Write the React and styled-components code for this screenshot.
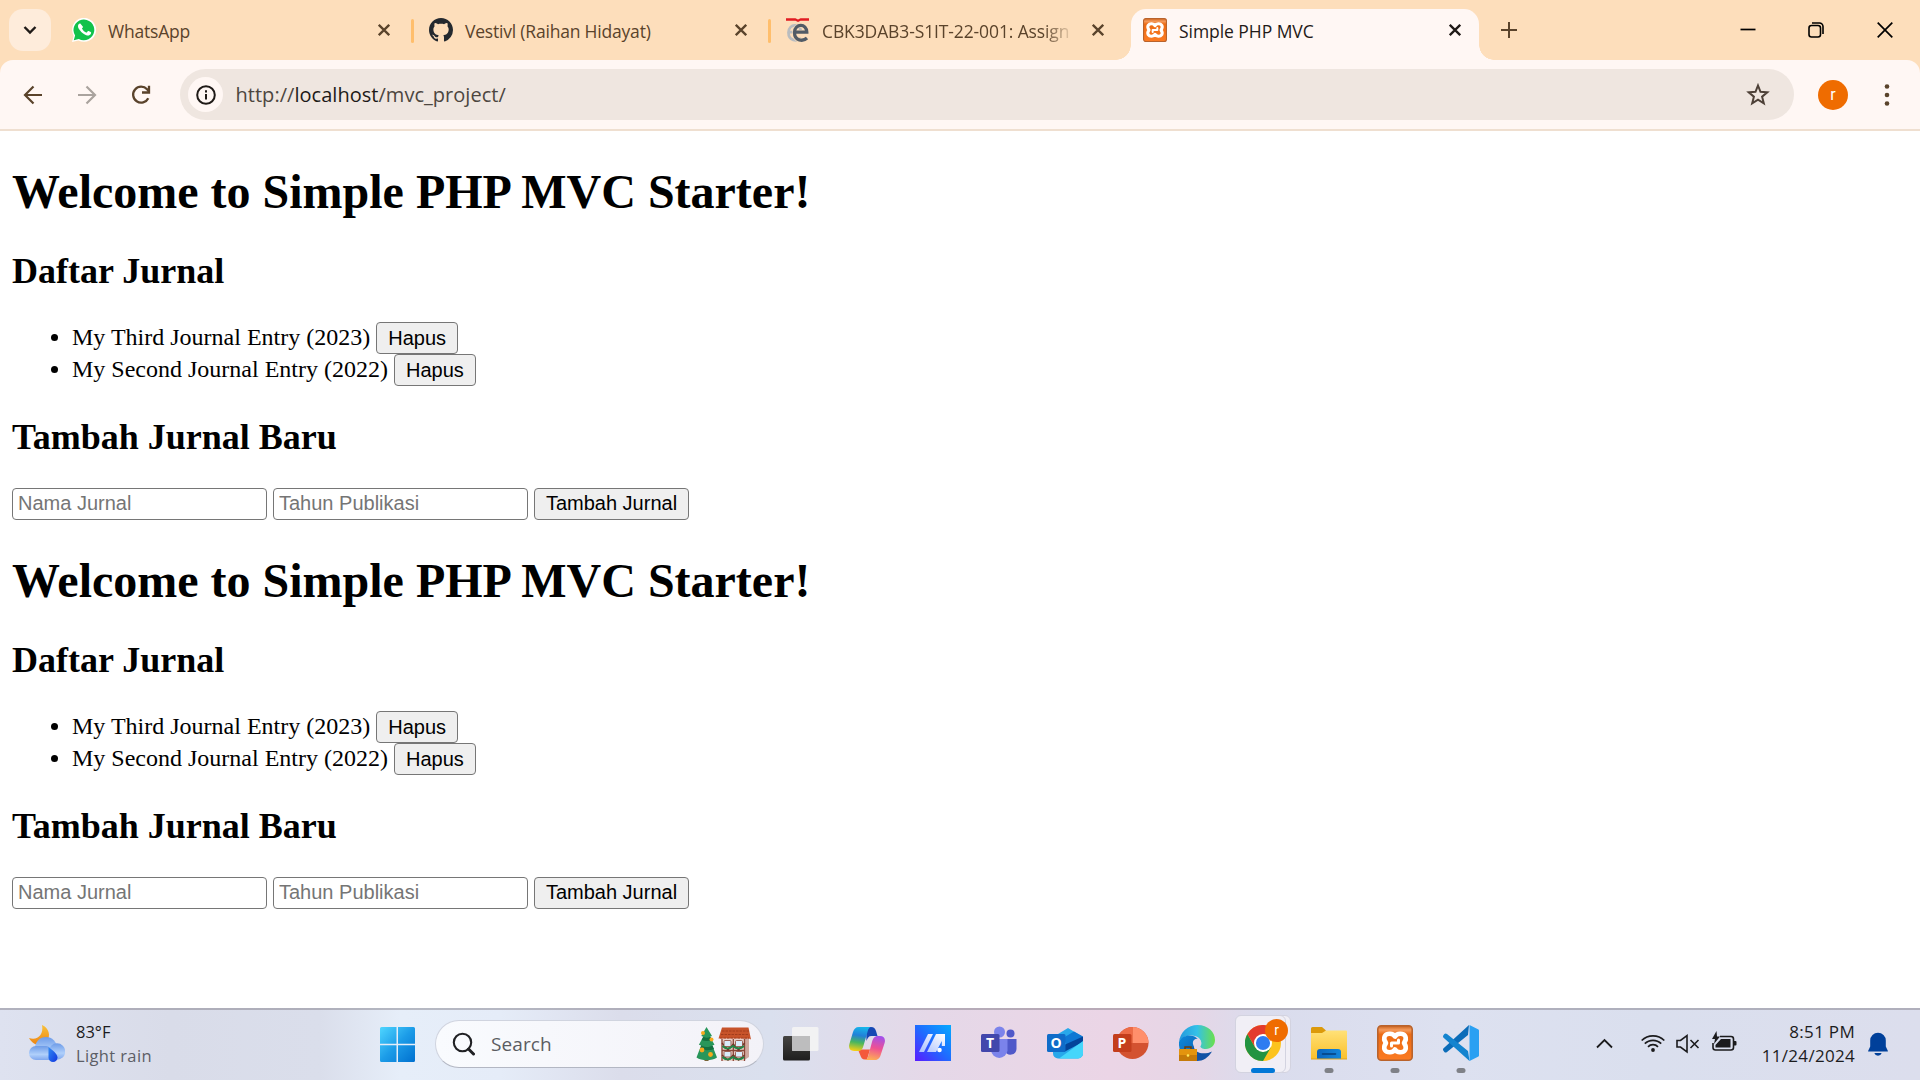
import React from "react";
import styled, { createGlobalStyle, css } from "styled-components";

const uiFont = `"Open Sans", "Noto Sans", sans-serif`;

const Global = createGlobalStyle`
  * { box-sizing: border-box; }
  html, body { margin: 0; padding: 0; background: #fff; }
  body { width: 1920px; height: 1080px; overflow: hidden; }
`;

const Screen = styled.div`
  width: 1920px;
  height: 1080px;
  display: flex;
  flex-direction: column;
  overflow: hidden;
`;

/* ---------- tab strip ---------- */
const TabStrip = styled.header`
  height: 60px;
  flex: none;
  background: #fddebb;
  display: flex;
  align-items: flex-start;
  padding-left: 9px;
`;
const TabSearch = styled.button`
  width: 42px;
  height: 42px;
  margin: 9px 9px 0 0;
  padding: 0;
  border: 0;
  border-radius: 14px;
  background: #feecdb;
  display: grid;
  place-items: center;
`;
const Tab = styled.div`
  width: ${(p) => p.$w}px;
  height: 51px;
  margin-top: 9px;
  padding: 0 ${(p) => p.$right}px 9px ${(p) => p.$left}px;
  display: flex;
  align-items: center;
  color: ${(p) => (p.$active ? "#1f1a17" : "#5a432b")};
  ${(p) =>
    p.$active &&
    css`
      background: #fff7f4;
      border-radius: 15px 15px 0 0;
      position: relative;
      &::before,
      &::after {
        content: "";
        position: absolute;
        bottom: 0;
        width: 15px;
        height: 15px;
      }
      &::before {
        left: -15px;
        background: radial-gradient(circle at 0 0, transparent 14.5px, #fff7f4 15px);
      }
      &::after {
        right: -15px;
        background: radial-gradient(circle at 100% 0, transparent 14.5px, #fff7f4 15px);
      }
    `}
`;
const TabTitle = styled.span`
  flex: 1;
  min-width: 0;
  margin: 1px 18px 0 12px;
  font: 400 17.5px/24px ${uiFont};
  letter-spacing: ${(p) => p.$ls || 0}px;
  white-space: nowrap;
  ${(p) =>
    p.$fade &&
    css`
      -webkit-mask-image: linear-gradient(90deg, #000 88%, transparent 100%);
      mask-image: linear-gradient(90deg, #000 88%, transparent 100%);
    `}
`;
const Separator = styled.i`
  width: 3px;
  height: 24px;
  margin-top: 19px;
  border-radius: 2px;
  background: #ffbe6c;
`;
const NewTab = styled.div`
  margin: 18px 0 0 18px;
  height: 24px;
`;
const WindowButtons = styled.div`
  margin-left: auto;
  margin-right: 1px;
  display: flex;
  height: 59px;
`;
const WindowButton = styled.div`
  width: 68.5px;
  display: grid;
  place-items: center;
`;

/* ---------- toolbar ---------- */
const ToolbarBack = styled.div`
  background: #fddebb;
  flex: none;
`;
const Toolbar = styled.div`
  height: 71px;
  border-bottom: 2px solid #efdfd0;
  border-radius: 13px 13px 0 0;
  background: #fff7f4;
  display: flex;
  align-items: center;
  padding: 0 18px 0 21px;
`;
const NavIcon = styled.div`
  width: 24px;
  height: 24px;
  margin-right: 30px;
`;
const Omnibox = styled.div`
  width: 1614px;
  height: 51px;
  margin-left: -3px;
  border-radius: 26px;
  background: #efe6e0;
  display: flex;
  align-items: center;
  padding: 0 24px 0 8px;
`;
const SiteInfo = styled.div`
  width: 35px;
  height: 35px;
  border-radius: 50%;
  background: #fff7f4;
  display: grid;
  place-items: center;
`;
const Url = styled.div`
  flex: 1;
  margin-left: 12.5px;
  font: 400 20px/28px ${uiFont};
  letter-spacing: 0.03px;
  color: #4d4640;
  b {
    font-weight: 400;
    color: #1d1a18;
  }
`;
const Avatar = styled.div`
  width: ${(p) => p.$size}px;
  height: ${(p) => p.$size}px;
  border-radius: 50%;
  background: #ef6c00;
  color: #fff;
  font: 400 ${(p) => p.$font}px / ${(p) => p.$size}px Roboto, sans-serif;
  text-align: center;
`;
const ProfileSlot = styled.div`
  margin: 0 27px 0 24px;
`;

/* ---------- page ---------- */
const Page = styled.main`
  flex: 1;
  min-height: 0;
  padding: 0 12px;
  background: #fff;
  color: #000;
  font-family: "Liberation Serif", "Times New Roman", serif;
  font-size: 24px;
`;
const Title = styled.h1`
  margin: 0;
  padding-top: 33px;
  font-size: 48px;
  line-height: 55px;
`;
const Heading = styled.h2`
  margin: ${(p) => p.$top}px 0 ${(p) => p.$bottom}px;
  font-size: 36px;
  line-height: 41px;
`;
const List = styled.ul`
  margin: 0;
  padding-left: 60px;
`;
const Item = styled.li`
  height: 32px;
  line-height: 30px;
`;
const ItemRow = styled.span`
  display: inline-flex;
  align-items: flex-start;
  gap: 6px;
  height: 32px;
  vertical-align: top;
`;
const Button = styled.button`
  width: ${(p) => p.$w}px;
  height: 32px;
  padding: 0;
  border: 1.5px solid #767676;
  border-radius: 4px;
  background: #efefef;
  color: #000;
  font: 400 20px/28px "Liberation Sans", Arial, sans-serif;
`;
const SubmitButton = styled(Button)`
  padding-bottom: 2px;
  line-height: 26px;
`;
const Form = styled.form`
  display: flex;
  gap: 6px;
  padding-top: 1px;
`;
const Field = styled.input`
  width: 255px;
  height: 32px;
  padding: 0 4px 1px 5px;
  border: 1.5px solid #767676;
  border-radius: 4px;
  background: #fff;
  font: 400 20px "Liberation Sans", Arial, sans-serif;
  &::placeholder {
    color: #757575;
    opacity: 1;
  }
`;

/* ---------- taskbar ---------- */
const Taskbar = styled.footer`
  flex: none;
  height: 72px;
  border-top: 2px solid rgba(110, 105, 115, 0.4);
  background: linear-gradient(
    90deg,
    #dee2f0 0,
    #d9dce9 170px,
    #dadeeb 320px,
    #e6eef9 400px,
    #e5ecf8 500px,
    #dbddeb 620px,
    #dae0ee 770px,
    #e5d8e8 930px,
    #ebd5e6 1110px,
    #e6d6e6 1190px,
    #dadced 1260px,
    #dde1f0 1450px,
    #dadfee 1650px,
    #dcdeed 1920px
  );
  background-origin: border-box;
  display: flex;
  font-family: ${uiFont};
`;
const Weather = styled.div`
  width: 380px;
  padding: 15px 0 0 29px;
  display: flex;
  gap: 11px;
`;
const Lines = styled.div`
  margin-top: -5px;
  font-size: ${(p) => p.$size || 16.5}px;
  line-height: 24px;
  color: #1c1c1e;
  text-align: ${(p) => p.$align || "left"};
  letter-spacing: ${(p) => p.$ls || 0}px;
`;
const Muted = styled.div`
  color: #5c5e66;
  letter-spacing: 0.37px;
`;
const Start = styled.div`
  width: 35px;
  margin: 17px 21px 0 0;
`;
const Search = styled.div`
  width: 329px;
  height: 48px;
  margin-top: 10px;
  margin-left: -1px;
  border: 1.5px solid #d0d4df;
  border-bottom-color: #b3b7c3;
  border-radius: 24px;
  background: linear-gradient(90deg, #f9fbfe, #f3f2f8);
  display: flex;
  align-items: center;
  padding: 0 11px 0 15px;
  span {
    flex: 1;
    margin-left: 16px;
    font-size: 19px;
    letter-spacing: 0.1px;
    color: #5b5c61;
  }
`;
const Apps = styled.div`
  display: flex;
  padding-left: 4px;
`;
const AppSlot = styled.div`
  width: 66px;
  height: 70px;
  padding-top: 15px;
  display: flex;
  justify-content: center;
  position: relative;
  svg {
    display: block;
    position: relative;
  }
`;
const ActiveTile = styled.div`
  position: absolute;
  left: 5px;
  top: 5px;
  width: ${(p) => p.$w}px;
  height: 58px;
  border: 1.5px solid #d3d3e0;
  border-radius: 6px;
  background: #f1eff6;
`;
const Indicator = styled.i`
  position: absolute;
  top: 58px;
  left: 50%;
  width: ${(p) => (p.$active ? 24 : 9)}px;
  height: 5px;
  transform: translateX(-50%);
  border-radius: 3px;
  background: ${(p) => (p.$active ? "#0078d7" : "#7f8187")};
`;
const Badge = styled.div`
  position: absolute;
  left: 35px;
  top: 9px;
`;
const Tray = styled.div`
  margin-left: auto;
  display: flex;
  padding: 0 32px 0 0;
`;
const TrayIcon = styled.div`
  margin-top: ${(p) => p.$top}px;
  margin-right: ${(p) => p.$gap}px;
  height: 26px;
`;
const Clock = styled.div`
  width: 94px;
  margin-right: 13px;
  padding-top: 15px;
`;

/* ---------- icons ---------- */
const Close = ({ color = "#5a432b" }) => (
  <svg width="12" height="24" viewBox="0 0 12 24" fill="none" stroke={color} strokeWidth="2.3">
    <path d="M.8 6.800l10.400 10.400M11.200 6.800L.8 17.200" />
  </svg>
);
const WhatsApp = () => (
  <svg width="24" height="24" viewBox="0 0 24 24">
    <path fill="#fff" d="M0 24l1.700-6.200A12 12 0 1 1 6.400 22.400z" />
    <path fill="#12c24b" d="M1.800 22.200l1.300-4.700A10.400 10.400 0 1 1 6.800 21z" />
    <path fill="#fff" d="M8.500 6c-.3-.6-.5-.6-.9-.6-.9 0-2.200 1.100-2.200 3 0 1.900 1.400 3.700 1.600 3.900.2.300 2.700 4.300 6.700 5.800 3.300 1.300 4 .9 4.600.7 1-.3 2-1.300 2.100-2.200.2-1 .1-1.200-.4-1.400l-2.500-1.200c-.4-.2-.7-.1-.9.2l-1 1.300c-.2.300-.5.300-.9.100-2.200-1-3.600-2.500-4.600-4.300-.2-.3 0-.5.200-.7.700-.7 1-1.200.8-1.700z" transform="translate(1.300 .9) scale(.87)" />
  </svg>
);
const GitHub = () => (
  <svg width="24" height="24" viewBox="0 0 16 16" fill="#24292f">
    <path d="M8 0C3.580 0 0 3.580 0 8c0 3.540 2.290 6.530 5.470 7.590.4.070.55-.17.55-.38 0-.19-.01-.82-.01-1.490-2.010.37-2.530-.49-2.690-.94-.09-.23-.48-.94-.82-1.130-.28-.15-.68-.52-.01-.53.63-.01 1.080.58 1.230.82.72 1.210 1.870.87 2.330.66.07-.52.28-.87.51-1.070-1.780-.2-3.640-.89-3.640-3.950 0-.87.31-1.590.82-2.150-.08-.2-.36-1.020.08-2.120 0 0 .67-.21 2.200.82.64-.18 1.320-.27 2-.27s1.360.09 2 .27c1.530-1.040 2.200-.82 2.200-.82.44 1.100.16 1.920.08 2.120.51.56.82 1.270.82 2.150 0 3.070-1.870 3.750-3.650 3.950.29.25.54.73.54 1.480 0 1.070-.01 1.930-.01 2.200 0 .21.15.46.55.38A8.010 8.010 0 0 0 16 8c0-4.420-3.580-8-8-8z" />
  </svg>
);
const eShape = "M8.500 14.200h12.300C20.800 5 8.800 5.300 8.500 14.500c0 8.500 8.500 9.300 12.500 5.500";
const ELearn = () => (
  <svg width="24" height="24" viewBox="0 0 24 24" fill="none">
    <path d={eShape} transform="translate(-6 0)" stroke="#b9bcbf" strokeWidth="2.800" />
    <path d={eShape} stroke="#fddebb" strokeWidth="4.600" />
    <path d={eShape} stroke="#515b66" strokeWidth="3.300" />
    <path d="M0 .3h9.500l2.500 1.200 2.500-1.200H23v2.500h-8.500L12 4 9.500 2.800H0z" fill="#e11b22" />
  </svg>
);
const Xampp = ({ size }) => (
  <svg width={size} height={size} viewBox="0 0 36 36">
    <defs>
      <linearGradient id={"xa" + size} x2="0" y2="1">
        <stop stopColor="#c9611c" />
        <stop offset=".12" stopColor="#f59a5b" />
        <stop offset=".25" stopColor="#ec6b14" />
        <stop offset="1" stopColor="#fb7b23" />
      </linearGradient>
    </defs>
    <rect x=".8" y=".8" width="34.400" height="34.400" rx="3.500" fill={"url(#xa" + size + ")"} stroke="#b9632c" strokeWidth="1.600" />
    <path
      d="M18 11.500C16 8 10 7.800 7.800 11c-1.500 2.800-.3 5 1.200 7-1.500 2-2.700 4.200-1.200 7 2.200 3.200 8.200 3 10.200-.5 2 3.500 8 3.700 10.200.5 1.500-2.800.3-5-1.200-7 1.500-2 2.700-4.200 1.200-7C26 7.800 20 8 18 11.500z"
      fill="none"
      stroke="#fff"
      strokeWidth="4.600"
      strokeLinejoin="round"
    />
    <path d="M14.500 18h7M21.500 15v3M14.500 18v3" stroke="#fff" strokeWidth="3" strokeLinecap="round" />
  </svg>
);
const WeatherIcon = () => (
  <svg width="36" height="37" viewBox="0 0 36 37">
    <defs>
      <linearGradient id="moon" x2="0" y2="1"><stop stopColor="#f7c23c" /><stop offset="1" stopColor="#ee8413" /></linearGradient>
      <linearGradient id="cl" x2="0" y2="1"><stop stopColor="#6d9be8" /><stop offset=".6" stopColor="#b0d0fb" /><stop offset="1" stopColor="#7fa7ee" /></linearGradient>
      <linearGradient id="drop" x2="1" y2="1"><stop stopColor="#2f8bf2" /><stop offset="1" stopColor="#1237e0" /></linearGradient>
    </defs>
    <path d="M13 0c7 3 9 11 5 16S5 22 0 13c8 3 15-3 13-13z" fill="url(#moon)" />
    <circle cx="17" cy="23" r="11" fill="url(#cl)" />
    <circle cx="28" cy="26.500" r="8.200" fill="url(#cl)" />
    <path d="M7 21h10c3 0 6 3 6 8v6H7a7 7 0 0 1 0-14z" fill="url(#cl)" />
    <path d="M19.500 22c4 3 9 7 9 10.500a4.500 4.500 0 0 1-9 0z" fill="url(#drop)" />
  </svg>
);
const StartIcon = () => (
  <svg width="35" height="35" viewBox="0 0 35 35">
    <defs><linearGradient id="win" gradientUnits="userSpaceOnUse" x1="0" y1="0" x2="35" y2="35"><stop stopColor="#4fd6ff" /><stop offset=".5" stopColor="#1c9ce8" /><stop offset="1" stopColor="#0070cf" /></linearGradient></defs>
    <path fill="url(#win)" d="M1.500 0h15v16.700H0V1.500A1.500 1.500 0 0 1 1.500 0zM18 0h15.500A1.500 1.500 0 0 1 35 1.500v15.200H18zM0 18.200h16.500V35h-15A1.500 1.500 0 0 1 0 33.500zM18 18.200h17v15.300a1.500 1.500 0 0 1-1.500 1.500H18z" />
  </svg>
);
const Holiday = () => (
  <svg width="56" height="36" viewBox="0 0 56 36">
    <path fill="#8a5b31" d="M8.500 30h4v5h-4z" />
    <path fill="#28965a" d="M10.500 1l5.500 9-2 .7 4.500 8-2.200.8L21 31.500c-5 3.500-15.500 3.500-20.500 0l4.600-12-2.200-.8 4.400-8-2-.7z" />
    <path fill="#14703f" d="M5.500 19.500c4 2.200 8 1.800 11 0l1.500 3.600c-4 1.600-10 1.600-14 0zM7.300 10.700c2.500 1.400 5 1.200 7 0l1.800 3.300c-3 1.300-7.500 1.300-10.500 0z" />
    <g fill="#f6a91d"><circle cx="7" cy="7" r="2" /><circle cx="15.500" cy="13.500" r="2" /><circle cx="6" cy="24" r="2.400" /><circle cx="14.500" cy="28.500" r="2.400" /></g>
    <path fill="#cfa79e" d="M47 12l6-7v26l-6 4z" />
    <path fill="#e9cfc8" d="M25.500 13H49v22H25.500z" />
    <path d="M26 13v22M37.300 13v22M48.500 13v22M25.500 24.500H49" stroke="#8a4638" strokeWidth="1.300" fill="none" />
    <path d="M26 17l6 7 5.300-6 5.300 6 6-7M26 29l6 5 5.300-5 5.300 5 6-5" stroke="#74352a" strokeWidth="1.400" fill="none" />
    <g fill="#d9ecfb" stroke="#8c4434" strokeWidth=".8"><rect x="28" y="14.500" width="7" height="6" rx="1" /><rect x="39.500" y="14.500" width="7" height="6" rx="1" /><rect x="28" y="25.500" width="7" height="5.500" rx="1" /><rect x="39.500" y="25.500" width="7" height="5.500" rx="1" /></g>
    <path d="M26.500 20c3 3 7 3 10.500 0 3 3 8 3 11 0M26.500 31c3 3 7 3 10.500 0 3 3 8 3 11 0" stroke="#248547" strokeWidth="1.800" fill="none" />
    <path fill="#c7532a" d="M26 1.500h26.500L55 13.500l-2-1H22.500z" />
    <path d="M26 5h27M25 8.500h28M24 12h29" stroke="#9f3b1b" strokeWidth=".9" strokeDasharray="2.500 1" />
  </svg>
);
const TaskView = () => (
  <svg width="36" height="36" viewBox="0 0 36 36">
    <defs><linearGradient id="tv" x2="0" y2="1"><stop stopColor="#454442" /><stop offset="1" stopColor="#1e1e1e" /></linearGradient></defs>
    <rect x="0" y="11" width="27" height="24.500" rx="1.500" fill="url(#tv)" />
    <rect x="9" y="2" width="26.500" height="24" rx="1.500" fill="#f2f2f3" />
    <path d="M9 11h18v15H10.500A1.500 1.500 0 0 1 9 24.500z" fill="#bdbdbe" />
  </svg>
);
const Copilot = () => (
  <svg width="36" height="36" viewBox="0 0 36 36">
    <defs>
      <linearGradient id="cp1" x1=".5" x2=".35" y2="1"><stop stopColor="#17b5ea" /><stop offset=".35" stopColor="#2180d8" /><stop offset=".65" stopColor="#49b65f" /><stop offset="1" stopColor="#f6cf15" /></linearGradient>
      <linearGradient id="cp2" x1=".6" x2=".4" y2="1"><stop stopColor="#a350ea" /><stop offset=".5" stopColor="#ef5192" /><stop offset="1" stopColor="#fdae55" /></linearGradient>
    </defs>
    <path d="M17 2h5c3 0 4 1.500 5 4l1.500 5h-6c-3 0-4 2-5 5z" fill="#1648b4" />
    <path d="M9 24.500h12l-3 10h-2c-3 0-4-2-5-5z" fill="#f4593b" />
    <path d="M10 2h13c-3 0-3.700 2-4.500 5l-3.800 13c-1 3.500-2 6-5.500 6H5c-4 0-5.800-3-4.600-7L4 7c1-3 2.500-5 6-5z" fill="url(#cp1)" />
    <path d="M22 11h9c4 0 5.800 3 4.600 7L32 29c-1 3.500-2.500 6-6 6H15c3 0 3.700-2 4.500-5l3.200-12c1-3.500 1.800-6 5-7z" fill="url(#cp2)" />
  </svg>
);
const MyAsus = () => (
  <svg width="36" height="36" viewBox="0 0 36 36">
    <defs><linearGradient id="ma" x1="0" y1="1" x2="1" y2="0"><stop stopColor="#5a1bff" /><stop offset=".5" stopColor="#1f6bff" /><stop offset="1" stopColor="#05aaff" /></linearGradient>
    <linearGradient id="mb" x1="1" y1="0" x2="0" y2="1"><stop stopColor="#fff" /><stop offset="1" stopColor="#a9bfff" /></linearGradient></defs>
    <path d="M0 0h36v36H0z" fill="url(#ma)" />
    <path fill="url(#mb)" d="M13 9h5L9 27H4zM21 9h5l-9 18h-5zM25 9h5v12h-3.200v-5L21 27h-4.500z" />
    <circle cx="24.500" cy="25" r="2.300" fill="#fff" />
  </svg>
);
const Letter = ({ x, y, children }) => (
  <text x={x} y={y} fill="#fff" textAnchor="middle" fontFamily='"Open Sans", sans-serif' fontWeight="700" fontSize="14">{children}</text>
);
const Teams = () => (
  <svg width="36" height="36" viewBox="0 0 36 36">
    <circle cx="29.500" cy="8.500" r="4" fill="#4f58c9" />
    <path d="M24 14h11.500v10a6 6 0 0 1-11.500 2z" fill="#5059c9" />
    <circle cx="18.500" cy="7" r="5.500" fill="#7b83eb" />
    <path d="M10 14h16.500v11.500a8.300 8.300 0 0 1-16.500 0z" fill="#7b83eb" />
    <rect y="9" width="18.500" height="18" rx="1.500" fill="#4247ac" />
    <Letter x="9" y="23">T</Letter>
  </svg>
);
const Outlook = () => (
  <svg width="36" height="36" viewBox="0 0 36 36">
    <path d="M6 12L21 3l15 9v16a5 5 0 0 1-5 5.500H11a5 5 0 0 1-5-5z" fill="#28a8ea" />
    <path d="M27 6.500l9 5L20 21l-4-8z" fill="#0f78d4" />
    <path d="M36 11.500V17L17 27v-7z" fill="#03449a" />
    <path d="M36 16v12a5 5 0 0 1-5 5.500H12z" fill="#45d6fb" />
    <rect y="9" width="18.500" height="18" rx="1.500" fill="#0f6cc9" />
    <Letter x="9.200" y="23">O</Letter>
  </svg>
);
const PowerPoint = () => (
  <svg width="36" height="36" viewBox="0 0 36 36">
    <circle cx="19.500" cy="18" r="16" fill="#d35230" />
    <path d="M19.500 2a16 16 0 0 1 16 16h-16z" fill="#ff8f6b" />
    <path d="M19.500 2v16h-16a16 16 0 0 1 16-16z" fill="#ed6c47" />
    <rect y="9" width="18.500" height="18" rx="1.500" fill="#c43e1c" />
    <Letter x="9" y="23">P</Letter>
  </svg>
);
const Edge = () => (
  <svg width="36" height="36" viewBox="0 0 36 36">
    <defs>
      <linearGradient id="eg1"><stop stopColor="#2598dc" /><stop offset=".5" stopColor="#34c1e8" /><stop offset="1" stopColor="#6be04a" /></linearGradient>
      <linearGradient id="eg2" x2="1" y2="1"><stop stopColor="#0d8bdc" /><stop offset="1" stopColor="#0f55a8" /></linearGradient>
    </defs>
    <path d="M0 17C1 7 9 0 18.500 0 29 0 36 7 36 15c0 5.500-4 9-9 9-4 0-6-1.500-5.500-3 1.500-1.500 1.500-7-4-9.500C10 9 3 12 0 17z" fill="url(#eg1)" />
    <path d="M0 17c3-7 12-8 17-4.500 3 2 3 4 2 4-4 0-6 5-4 10 1 4 5 7 9 7.500C10 39-1 30 0 17z" fill="url(#eg2)" />
    <path d="M14.500 20c.5 9 11 10 18.500 6.500C29 33 24 36 18 36c-5-5-6-11-3.500-16z" fill="#1252a5" />
    <circle cx="18" cy="18" r="4.200" fill="#e7d6e6" />
    <path d="M17 21c1 5 8 7 16 3.500l-1 2.300c-8 2.500-14 .5-16-4z" fill="#e7d6e6" />
    <path d="M6 24v-2h6v2" fill="none" stroke="#6c3c0a" strokeWidth="1.500" />
    <rect y="24" width="18" height="12" fill="#c57a09" />
    <path d="M0 24h18v6H0z" fill="#e3940e" />
    <circle cx="9" cy="30.500" r="1.300" fill="#ffea5b" />
  </svg>
);
const Chrome = () => (
  <svg width="36" height="36" viewBox="0 0 48 48">
    <circle cx="24" cy="24" r="24" fill="#fcc31e" />
    <path d="M3.200 12L13.600 30 24 36l10.400-6L24 48A24 24 0 0 1 3.200 12z" fill="#229342" />
    <path d="M3.200 12L13.600 30 24 12h20.800A24 24 0 0 0 3.200 12z" fill="#e33b2e" />
    <circle cx="24" cy="24" r="12" fill="#fff" />
    <circle cx="24" cy="24" r="9.400" fill="#2e7cf0" />
  </svg>
);
const Explorer = () => (
  <svg width="36" height="36" viewBox="0 0 36 36">
    <defs><linearGradient id="fx" x2="0" y2="1"><stop stopColor="#ffe178" /><stop offset="1" stopColor="#fbc02a" /></linearGradient>
    <linearGradient id="fy"><stop stopColor="#0c65bd" /><stop offset="1" stopColor="#1287dc" /></linearGradient></defs>
    <path d="M0 3.500A1.500 1.500 0 0 1 1.500 2H11l4 3.500-4 5H0z" fill="#dc9a0b" />
    <path d="M0 8h11l4-2.500h20A1 1 0 0 1 36 6.500V34H0z" fill="url(#fx)" />
    <path d="M6 34v-7a3 3 0 0 1 3-3h18a3 3 0 0 1 3 3v7z" fill="url(#fy)" />
    <path d="M11.500 29h13" stroke="#053f7e" strokeWidth="1.500" strokeLinecap="round" />
    <path d="M0 34h36" stroke="#e0a61e" strokeWidth="1.200" />
  </svg>
);
const VSCode = () => (
  <svg width="36" height="36" viewBox="0 0 36 36">
    <path d="M26 0l-1 10L4 27c-1 .8-2 .6-2.600 0L.6 26c-.8-.8-.8-2 0-2.700z" fill="#0b6cb8" />
    <path d="M26.500 36L25 26 4 9c-1-.8-2-.6-2.600 0L.6 10c-.8.8-.8 2 0 2.700z" fill="#1484cf" />
    <path d="M26.500 0L35 4.200a1.500 1.500 0 0 1 1 1.500v24.600a1.500 1.500 0 0 1-1 1.500L26.500 36z" fill="#2aa0f2" />
  </svg>
);

const taskApps = [
  { name: "task-view", Icon: TaskView },
  { name: "copilot", Icon: Copilot },
  { name: "myasus", Icon: MyAsus },
  { name: "teams", Icon: Teams },
  { name: "outlook", Icon: Outlook },
  { name: "powerpoint", Icon: PowerPoint },
  { name: "edge", Icon: Edge },
  { name: "chrome", Icon: Chrome, active: true },
  { name: "explorer", Icon: Explorer, open: true },
  { name: "xampp", Icon: () => <Xampp size={36} />, open: true },
  { name: "vscode", Icon: VSCode, open: true },
];

const entries = ["My Third Journal Entry (2023)", "My Second Journal Entry (2022)"];

function JournalSection() {
  return (
    <section>
      <Title>Welcome to Simple PHP MVC Starter!</Title>
      <Heading $top={32} $bottom={30}>Daftar Jurnal</Heading>
      <List>
        {entries.map((text) => (
          <Item key={text}>
            <ItemRow>
              {text}
              <Button type="button" $w={82}>Hapus</Button>
            </ItemRow>
          </Item>
        ))}
      </List>
      <Heading $top={31} $bottom={29}>Tambah Jurnal Baru</Heading>
      <Form onSubmit={(e) => e.preventDefault()}>
        <Field placeholder="Nama Jurnal" />
        <Field placeholder="Tahun Publikasi" />
        <SubmitButton $w={155}>Tambah Jurnal</SubmitButton>
      </Form>
    </section>
  );
}

export default function App() {
  return (
    <Screen>
      <Global />
      <TabStrip>
        <TabSearch>
          <svg width="14" height="10" viewBox="0 0 14 10" fill="none" stroke="#1f1a17" strokeWidth="2.400"><path d="M1.500 2L7 7.500 12.500 2" /></svg>
        </TabSearch>
        <Tab $w={351} $left={12} $right={21}>
          <WhatsApp />
          <TabTitle $ls={-0.2}>WhatsApp</TabTitle>
          <Close />
        </Tab>
        <Separator />
        <Tab $w={354} $left={15} $right={21}>
          <GitHub />
          <TabTitle $ls={-0.2}>Vestivl (Raihan Hidayat)</TabTitle>
          <Close />
        </Tab>
        <Separator />
        <Tab $w={360} $left={15} $right={27}>
          <ELearn />
          <TabTitle $fade $ls={-0.12}>CBK3DAB3-S1IT-22-001: Assign</TabTitle>
          <Close />
        </Tab>
        <Tab $w={348} $active $left={12} $right={18}>
          <Xampp size={24} />
          <TabTitle $ls={-0.05}>Simple PHP MVC</TabTitle>
          <Close color="#1f1a17" />
        </Tab>
        <NewTab>
          <svg width="24" height="24" viewBox="0 0 24 24" stroke="#5a432b" strokeWidth="2"><path d="M12 4v16M4 12h16" /></svg>
        </NewTab>
        <WindowButtons>
          <WindowButton>
            <svg width="16" height="16" viewBox="0 0 16 16" stroke="#000" strokeWidth="1.700"><path d="M.5 7.500h15" /></svg>
          </WindowButton>
          <WindowButton>
            <svg width="16" height="16" viewBox="0 0 16 16" fill="none" stroke="#000" strokeWidth="1.600"><rect x="1" y="3.500" width="11.500" height="11.500" rx="2.500" /><path d="M4 1h7.500A3.500 3.500 0 0 1 15 4.500V12" /></svg>
          </WindowButton>
          <WindowButton>
            <svg width="16" height="16" viewBox="0 0 16 16" stroke="#000" strokeWidth="1.700"><path d="M.7.7l14.600 14.600M15.300.7L.7 15.300" /></svg>
          </WindowButton>
        </WindowButtons>
      </TabStrip>

      <ToolbarBack>
        <Toolbar>
          <NavIcon>
            <svg width="24" height="24" viewBox="0 0 24 24" fill="none" stroke="#5a432b" strokeWidth="2.200"><path d="M21 12H4.500M12.500 3.500L4 12l8.500 8.500" /></svg>
          </NavIcon>
          <NavIcon>
            <svg width="24" height="24" viewBox="0 0 24 24" fill="none" stroke="#aaa39e" strokeWidth="2.200"><path d="M3 12h16.500M11.500 3.500L20 12l-8.500 8.500" /></svg>
          </NavIcon>
          <NavIcon>
            <svg width="24" height="24" viewBox="0 0 24 24" fill="none" stroke="#5a432b" strokeWidth="2.300"><path d="M19.300 15.200a8 8 0 1 1-1.200-8.900l1.700 2" /><path d="M20 2.800v6.700h-7" /></svg>
          </NavIcon>
          <Omnibox>
            <SiteInfo>
              <svg width="20" height="20" viewBox="0 0 20 20" fill="none" stroke="#1f1a17" strokeWidth="2"><circle cx="10" cy="10" r="8.800" /><path d="M10 9v5.500M10 5.200v2.200" /></svg>
            </SiteInfo>
            <Url>http://<b>localhost</b>/mvc_project/</Url>
            <svg width="24" height="24" viewBox="0 0 24 24" fill="none" stroke="#4d4037" strokeWidth="2"><path d="M12 2.500l2.500 6.300 6.800.5-5.200 4.400 1.700 6.600L12 16.700l-5.800 3.600 1.700-6.600-5.200-4.400 6.800-.5z" /></svg>
          </Omnibox>
          <ProfileSlot>
            <Avatar $size={30} $font={16}>r</Avatar>
          </ProfileSlot>
          <svg width="24" height="24" viewBox="0 0 24 24" fill="#5a432b"><circle cx="12" cy="3.500" r="2.300" /><circle cx="12" cy="12" r="2.300" /><circle cx="12" cy="20.500" r="2.300" /></svg>
        </Toolbar>
      </ToolbarBack>

      <Page>
        <JournalSection />
        <JournalSection />
      </Page>

      <Taskbar>
        <Weather>
          <WeatherIcon />
          <Lines>
            83°F
            <Muted>Light rain</Muted>
          </Lines>
        </Weather>
        <Start><StartIcon /></Start>
        <Search>
          <svg width="24" height="24" viewBox="0 0 24 24" fill="none" stroke="#202124"><circle cx="11.500" cy="10.500" r="8.700" strokeWidth="2.100" /><path d="M17.500 17l5 5" strokeWidth="3" strokeLinecap="round" /></svg>
          <span>Search</span>
          <Holiday />
        </Search>
        <Apps>
          {taskApps.map(({ name, Icon, active, open }) => (
            <AppSlot key={name}>
              {active && <ActiveTile $w={56} />}
              {active && <ActiveTile $w={51} />}
              <Icon />
              {active && (
                <Badge>
                  <Avatar $size={23} $font={14}>r</Avatar>
                </Badge>
              )}
              {(active || open) && <Indicator $active={active} />}
            </AppSlot>
          ))}
        </Apps>
        <Tray>
          <TrayIcon $top={22} $gap={28}>
            <svg width="17" height="24" viewBox="0 0 17 24" fill="none" stroke="#1b1b1d" strokeWidth="1.800"><path d="M1 15.500L8.500 8l7.500 7.500" /></svg>
          </TrayIcon>
          <TrayIcon $top={21} $gap={11}>
            <svg width="24" height="24" viewBox="0 0 24 24" fill="none" stroke="#1b1b1d" strokeWidth="1.700"><path d="M.7 9.500a16 16 0 0 1 22.600 0M3.800 12.700a11.600 11.600 0 0 1 16.400 0M7 15.800a7 7 0 0 1 10 0" /><circle cx="12" cy="19" r="1.900" fill="#1b1b1d" stroke="none" /></svg>
          </TrayIcon>
          <TrayIcon $top={22} $gap={12}>
            <svg width="24" height="24" viewBox="0 0 24 24" fill="none" stroke="#1b1b1d" strokeWidth="1.600"><path d="M1 8.500h3.500L11 3.500v16.500l-6.500-5H1zM14.500 8l8 8M22.500 8l-8 8" /></svg>
          </TrayIcon>
          <TrayIcon $top={20} $gap={24}>
            <svg width="25" height="24" viewBox="0 0 25 24" fill="#1b1b1d"><path d="M8 6.500h11a2.500 2.500 0 0 1 2.500 2.500v8.500A2.500 2.500 0 0 1 19 20H3.500A2.500 2.500 0 0 1 1 17.500V13" fill="none" stroke="#1b1b1d" strokeWidth="1.600" /><path d="M9 9h9.500v8.500H3.500V15zM22 11h1.500a1 1 0 0 1 1 1v2.500a1 1 0 0 1-1 1H22zM4.500 1L0 9h3l-1 5 6-7.500H5z" /></svg>
          </TrayIcon>
          <Clock>
            <Lines $align="right" $size={17} $ls={0.3}>
              <div>8:51 PM</div>
              <div>11/24/2024</div>
            </Lines>
          </Clock>
          <TrayIcon $top={22} $gap={0}>
            <svg width="20" height="25" viewBox="0 0 20 25" fill="#00409a"><path d="M10 .8a7.800 7.800 0 0 1 7.800 7.800v6l2 4.200a.5.500 0 0 1-.5.700H.7a.5.500 0 0 1-.5-.7l2-4.200v-6A7.800 7.800 0 0 1 10 .8zM6.300 21h7.400a3.900 3.900 0 0 1-7.400 0z" /></svg>
          </TrayIcon>
        </Tray>
      </Taskbar>
    </Screen>
  );
}
